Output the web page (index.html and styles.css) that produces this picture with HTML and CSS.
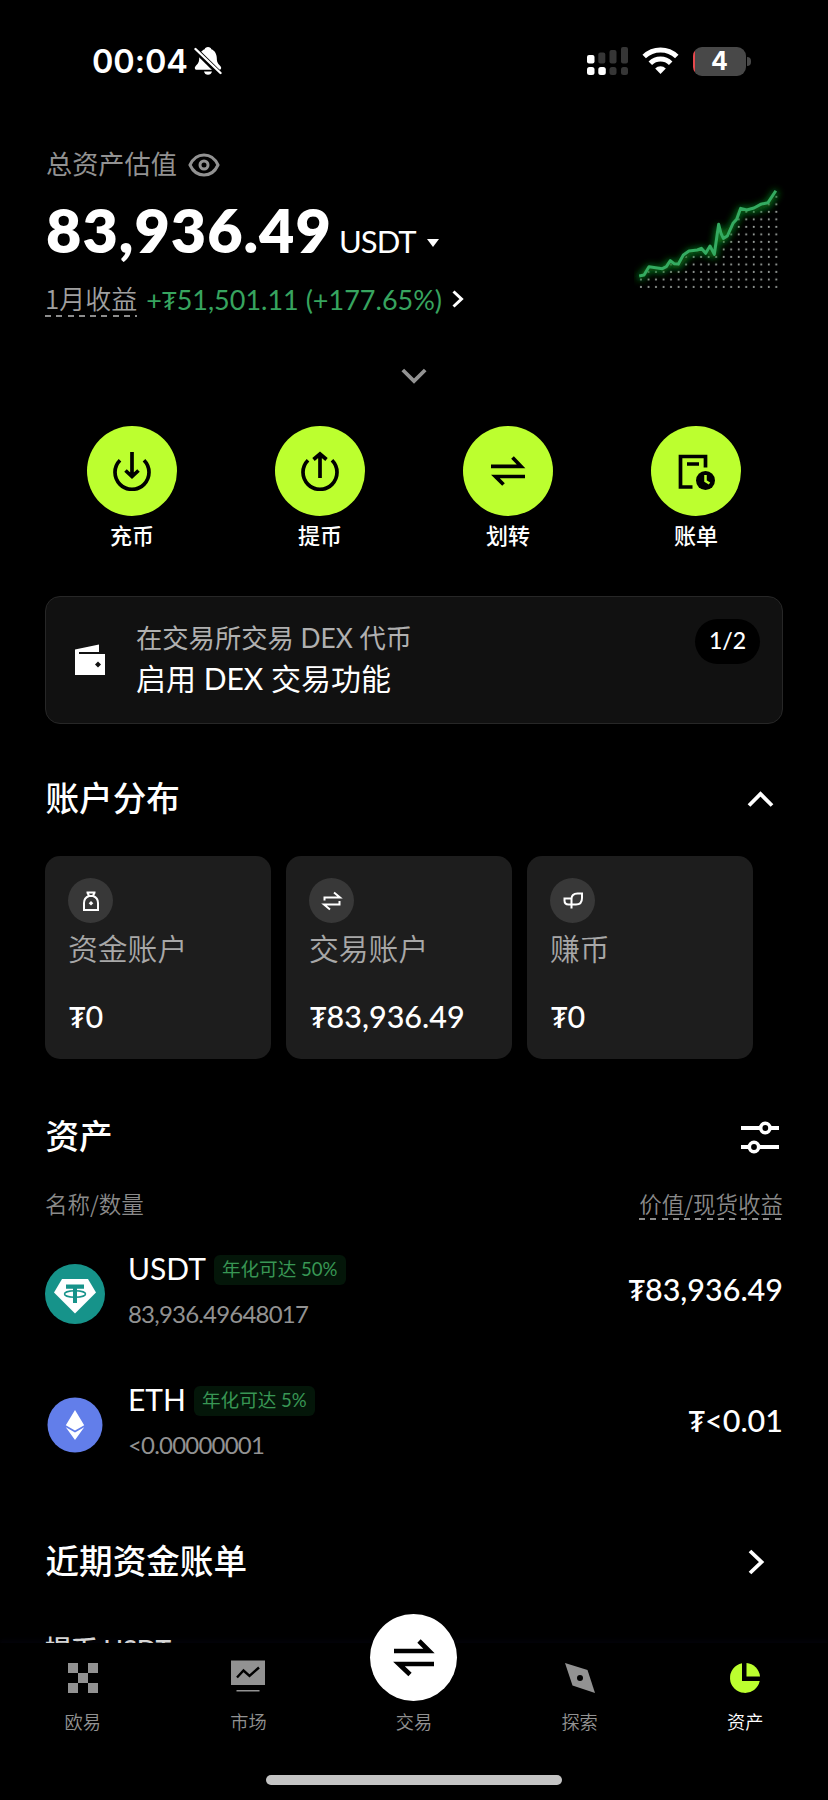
FILE: index.html
```html
<!DOCTYPE html>
<html lang="zh-CN">
<head>
<meta charset="utf-8">
<title>资产</title>
<link rel="stylesheet" href="styles.css">
</head>
<body>
<div class="phone">
  <main class="content">
    <header class="status">
      <span class="time">00:04</span>
      <svg class="bell" width="28" height="30" viewBox="0 0 28 30"><path fill="#fff" d="M14 1c-1.900 0-3 1-3.300 2.200C7 4.600 5.300 8 5.200 12c0 4-1 5.500-3.500 8-1.600 1.800-.8 3.800 1 3.800h22.600c1.800 0 2.600-2 1-3.800-2.500-2.500-3.500-4-3.500-8C22.700 8 21 4.600 17.300 3.200 17 2 15.900 1 14 1zM10 25.500h8c-.4 2-2 3.300-4 3.300s-3.600-1.300-4-3.300z"/><path d="M0 2.500l26 25.500" stroke="#000" stroke-width="5.500"/><path d="M1.500 3l25 24" stroke="#fff" stroke-width="2.400" stroke-linecap="round"/></svg>
      <svg class="signal" width="42" height="30" viewBox="0 0 42 30"><g fill="#fff"><rect x="0" y="9" width="7.500" height="8.500" rx="2"/><rect x="0" y="21" width="7.500" height="8" rx="2.500"/><rect x="11.300" y="21" width="7.500" height="8" rx="2.500"/></g><g fill="#363636"><rect x="11.300" y="6.500" width="7" height="11" rx="2"/><rect x="22.500" y="4" width="7" height="13.500" rx="2"/><rect x="34" y="1" width="7" height="16.500" rx="2"/><rect x="22.500" y="21" width="7" height="8" rx="2.500"/><rect x="34" y="21" width="7" height="8" rx="2.500"/></g></svg>
      <svg class="wifi" width="37" height="28" viewBox="0 0 37 28"><g fill="none" stroke="#fff" stroke-width="5"><path d="M2.200 9.500a23.500 23.500 0 0 1 32.600 0"/><path d="M8.300 16.200a14.700 14.700 0 0 1 20.400 0"/></g><path fill="#fff" d="M18.500 27l-5.300-5.500a7.600 7.600 0 0 1 10.600 0z"/></svg>
      <span class="battery">4</span>
    </header>

    <section class="summary">
      <div class="figures">
        <div class="total-label">总资产估值
          <svg width="32" height="24" viewBox="0 0 32 24" fill="none" stroke="#929292" stroke-width="3"><path d="M2 12C5 5.500 10 2 16 2s11 3.500 14 10c-3 6.500-8 10-14 10S5 18.500 2 12z"/><circle cx="16" cy="12" r="4"/></svg>
        </div>
        <div class="total"><b>83,936.49</b><span>USDT</span><i class="caret"></i></div>
        <div class="profit"><span class="period">1月收益</span><span class="gain">+<i class="tg">₮</i>51,501.11 (+177.65%)</span>
          <svg width="12" height="18" viewBox="0 0 12 18" fill="none" stroke="#fff" stroke-width="3"><path d="M1.500 1.500L9.500 9l-8 7.500"/></svg>
        </div>
      </div>
      <svg class="trend" width="154" height="126" viewBox="660 450 462 378">
        <defs>
          <pattern id="dots" x="670" y="790" width="22.550" height="22.550" patternUnits="userSpaceOnUse"><circle cx="11" cy="11" r="3" fill="#a4aaa6"/></pattern>
          <filter id="glow" x="-20%" y="-30%" width="140%" height="160%"><feGaussianBlur stdDeviation="11"/></filter>
        </defs>
        <path fill="url(#dots)" d="M672 772L690 765 705 745 757 746 769 728 790 738 825 698 862 690 901 708 928 660 957 615 980 570 1062 550 1083 520H1092V810H672z"/>
        <path class="halo" filter="url(#glow)" d="M680 770L705 745 745 750 769 727 790 738 825 698 862 690 901 706 914 625 928 660 957 615 980 570 1020 569 1062 553 1083 521"/>
        <path class="line" d="M680 767L690 765 705 740 725 743 745 746 757 740 769 722 780 731 793 732 808 705 825 693 850 690 862 685 875 700 888 678 901 703 914 613 921 640 928 655 940 648 957 610 968 598 980 565 998 570 1020 564 1040 553 1062 548 1083 516"/>
      </svg>
    </section>

    <div class="expand"><svg width="26" height="17" viewBox="0 0 26 17" fill="none" stroke="#939393" stroke-width="3.800"><path d="M1.800 2L13 13 24.200 2"/></svg></div>

    <nav class="actions">
      <a><span class="disc"><svg width="40" height="40" viewBox="0 0 40 40"><path d="M8 9.300a17 17 0 1 0 24 0M20 1v24.500M13.500 19.500l6.500 6 6.500-6"/></svg></span>充币</a>
      <a><span class="disc"><svg width="40" height="40" viewBox="0 0 40 40"><path d="M8 9.300a17 17 0 1 0 24 0M20 27V3M13.500 8.500L20 3l6.500 5.500"/></svg></span>提币</a>
      <a><span class="disc"><svg width="40" height="40" viewBox="0 0 40 40"><path d="M3 15.300h30L24.500 6.500M37 25.500H7.500L15.500 33.500"/></svg></span>划转</a>
      <a><span class="disc"><svg width="40" height="40" viewBox="0 0 40 40"><path d="M29.500 16.500v-11h-25v30.500h12M11 13h12"/><circle class="solid" cx="29.500" cy="29.500" r="9.500"/><path class="hand" d="M29.500 24v6l4 2.500"/></svg></span>账单</a>
    </nav>

    <section class="banner">
      <svg class="wallet" width="32" height="32" viewBox="0 0 32 32"><path fill="#fff" d="M1 5.500L25 .5v7.500H5v2h26v21H1z"/><path fill="#111" d="M24 17.500l3 3-3 3-3-3z"/></svg>
      <div class="banner-text"><p>在交易所交易 DEX 代币</p><h3>启用 DEX 交易功能</h3></div>
      <span class="pager">1/2</span>
    </section>

    <div class="heading h-accounts"><h2>账户分布</h2><svg class="up" width="28" height="18" viewBox="0 0 28 18" fill="none" stroke="#fff" stroke-width="3.800"><path d="M2 15.500L13.500 4 25 15.500"/></svg></div>

    <section class="cards">
      <article><span class="badge"><svg width="24" height="24" viewBox="0 0 24 24"><path d="M7.500 3.500h9M8.500 3.500L10 7h4l1.500-3.500M10 7c-4 1.500-5 4-5 7v7h14v-7c0-3-1-5.500-5-7"/><path class="fill" d="M12 12l2.300 2.300L12 16.600l-2.300-2.300z"/></svg></span><h4>资金账户</h4><p><i class="tg">₮</i>0</p></article>
      <article><span class="badge"><svg width="24" height="24" viewBox="0 0 24 24"><path d="M4.500 11.500V8.500h15.500L14 3.500M19.500 12v3.500H4l6 5"/></svg></span><h4>交易账户</h4><p><i class="tg">₮</i>83,936.49</p></article>
      <article><span class="badge"><svg width="24" height="24" viewBox="0 0 24 24"><path d="M10.500 19.500V10c0-3.500 2.500-5.500 6-5.500h4.500v4.500c0 4-2 6.500-6 6.500h-4.500M10.500 9.500H3.500v2c0 2.500 1.500 4 4 4h3"/></svg></span><h4>赚币</h4><p><i class="tg">₮</i>0</p></article>
    </section>

    <div class="heading h-assets"><h2>资产</h2><svg class="filter" width="40" height="34" viewBox="0 0 40 34" fill="none" stroke="#fff" stroke-width="4"><path d="M1 8h19M30 8h9M1 27h8M19 27h20"/><circle cx="25.300" cy="8" r="4.700" stroke-width="3.600"/><circle cx="14" cy="27" r="4.700" stroke-width="3.600"/></svg></div>
    <div class="columns"><span>名称/数量</span><span class="dashed">价值/现货收益</span></div>

    <section class="asset">
      <svg class="coin" width="60" height="60" viewBox="0 0 60 60"><circle cx="30" cy="30" r="30" fill="#16938a"/><path fill="#fff" d="M17 15h26l8 13.500L30 49.500 9 28.500z"/><path fill="#16938a" d="M21 20.500h18v4.200h-7v14.300h-4V24.700h-7z"/><ellipse cx="30" cy="30" rx="10.500" ry="3.200" fill="none" stroke="#16938a" stroke-width="1.500"/></svg>
      <div class="asset-info"><div class="name">USDT<span class="tag">年化可达 50%</span></div><div class="qty">83,936.49648017</div></div>
      <div class="value"><i class="tg">₮</i>83,936.49</div>
    </section>
    <section class="asset">
      <svg class="coin" width="60" height="60" viewBox="0 0 60 60"><circle cx="30" cy="30" r="27.500" fill="#627eea"/><path fill="#fff" d="M30 15l9.200 15.200L30 35.500l-9.200-5.300zM20.800 32.200L30 37.500l9.200-5.300L30 45z"/></svg>
      <div class="asset-info"><div class="name">ETH<span class="tag">年化可达 5%</span></div><div class="qty">&lt;0.00000001</div></div>
      <div class="value"><i class="tg">₮</i>&lt;0.01</div>
    </section>

    <div class="heading h-bills"><h2>近期资金账单</h2><svg class="right" width="18" height="26" viewBox="0 0 18 26" fill="none" stroke="#fff" stroke-width="3.800"><path d="M2 2l11.500 11L2 24"/></svg></div>
    <div class="bill">提币 USDT</div>
  </main>

  <footer class="tabbar">
    <nav class="tabs">
      <a><svg width="36" height="36" viewBox="0 0 36 36" fill="#929292"><path d="M3 3h10v10H3zM23 3h10v10H23zM13 13h10v10H13zM3 23h10v10H3zM23 23h10v10H23z"/></svg>欧易</a>
      <a><svg width="36" height="36" viewBox="0 0 36 36"><path fill="#929292" d="M1 .5h34V25H1zM6.500 30h23v1.500h-23z"/><path d="M7 17.500l6.500-7 6 5.500L29 7.500" fill="none" stroke="#000" stroke-width="2.400"/></svg>市场</a>
      <a class="trade"><span class="fab"><svg width="48" height="44" viewBox="0 0 48 44"><path d="M4 15h35L29 5M44 28H9l11 10.500"/></svg></span>交易</a>
      <a><svg width="36" height="36" viewBox="0 0 36 36"><path fill="#929292" d="M3 3l22.500 7L33 33l-22.500-7.500z"/><circle cx="18" cy="18" r="3" fill="#000"/></svg>探索</a>
      <a class="active"><svg width="36" height="36" viewBox="0 0 36 36" fill="#bcff2f"><path d="M15 3.200V21h17.700A15 15 0 1 1 15 3.200z"/><path d="M19.500 3A15 15 0 0 1 33 16.500H19.500z"/></svg>资产</a>
    </nav>
    <div class="home-bar"></div>
  </footer>
</div>
</body>
</html>
```
FILE: styles.css
```css
* { box-sizing: border-box; margin: 0; padding: 0; }
body { background: #000; color: #fff; font-family: Lato, "Noto Sans CJK SC", sans-serif; }
i { font-style: normal; }
svg { display: block; flex: none; }
.phone { width: 828px; height: 1800px; background: #000; }
.content { height: 1643px; padding: 0 45px; overflow: hidden; }
.tg { display: inline-block; font-family: "Noto Sans", "DejaVu Sans", sans-serif; font-size: .95em; line-height: 1; }

.status { display: flex; align-items: center; height: 122px; padding: 0 37px 0 47px; }
.time { font: 600 32.500px/40px Inter, sans-serif; letter-spacing: -.1px; width: 102px; padding-top: 2px; }
.bell { margin-right: auto; }
.signal { margin-right: -1px; }
.wifi { margin: 0 14px; }
.battery { position: relative; width: 53px; height: 29px; border-radius: 9px; background: linear-gradient(90deg, #e5484d 2px, #484848 2px); font: 700 25px/29px Inter, sans-serif; text-align: center; }
.battery::after { content: ""; position: absolute; left: 54px; top: 10px; width: 4px; height: 9px; border-radius: 0 4px 4px 0; background: #484848; }

.summary { display: flex; justify-content: space-between; height: 228px; }
.figures { padding-top: 22px; }
.total-label { display: flex; align-items: center; gap: 11px; height: 40px; padding-left: 1px; font-size: 26.200px; line-height: 38px; color: #929292; }
.total-label svg { margin-top: 2px; }
.total { display: flex; align-items: baseline; height: 76px; line-height: 76px; margin-top: 8px; padding-left: 1px; }
.total b { font-size: 61px; font-weight: 800; letter-spacing: 1px; }
.total span { font-size: 31px; margin-left: 7px; letter-spacing: -.9px; }
.caret { border: 6px solid transparent; border-top: 8px solid #fff; border-bottom: 0; margin-left: 11px; align-self: center; margin-top: 26px; }
.profit { display: flex; align-items: center; height: 40px; margin-top: 11px; font-size: 26px; white-space: nowrap; }
.period { color: #a0a0a0; font-weight: 350; font-family: "Noto Sans CJK SC", sans-serif; font-size: 26px; line-height: 31px; padding-bottom: 4px; }
.period, .dashed { background: repeating-linear-gradient(90deg, #8d8d8d 0 6px, transparent 6px 11.300px) bottom / 100% 2px no-repeat; }
.gain { color: #37a45f; font-size: 27px; margin: 0 10px 0 9px; }
.trend { margin: 48px -5px 0 0; }
.line, .halo { fill: none; stroke: #34ab61; stroke-width: 9; stroke-linejoin: round; stroke-linecap: square; }
.halo { stroke: #087a1c; stroke-width: 18; }

.expand { display: flex; justify-content: center; height: 76px; padding-top: 18px; }
.actions { display: grid; grid-template-columns: repeat(4, 188px); margin: 0 -7px; height: 170px; }
.actions a { display: flex; flex-direction: column; align-items: center; font-size: 22px; font-weight: 500; line-height: 40px; }
.disc { display: grid; place-items: center; width: 90px; height: 90px; border-radius: 50%; background: #bcff2f; }
.disc path, .fab path { fill: none; stroke: #000; stroke-width: 3.700; }
.fab path { stroke-width: 4.700; }
.disc .solid { fill: #000; }
.disc .hand { stroke: #bcff2f; stroke-width: 2.500; }

.banner { display: flex; height: 128px; border: 1px solid #272727; border-radius: 15px; background: #111; padding: 0 22px 0 28px; }
.wallet { margin-top: 47px; }
.banner-text { flex: 1; margin: 21px 0 0 30px; }
.banner-text p { color: #b0b0b0; font-size: 26.300px; line-height: 40px; }
.banner-text h3 { font-size: 30px; font-weight: 400; line-height: 41px; }
.pager { width: 65px; height: 45px; margin-top: 22px; border-radius: 23px; background: #000; font-size: 23px; font-weight: 500; line-height: 43px; text-align: center; }

.heading { display: flex; justify-content: space-between; align-items: center; height: 50px; }
.heading h2 { padding-left: .5px; font-size: 33.600px; font-weight: 500; line-height: 48px; margin-top: -2px; }
.h-accounts { margin-top: 50px; }
.up { margin-right: 8px; }
.cards { display: grid; grid-template-columns: repeat(3, 226px); gap: 15px; margin-top: 32px; }
.cards article { height: 203px; padding: 22px 23px; border-radius: 15px; background: #1d1d1d; }
.badge { display: grid; place-items: center; width: 45px; height: 45px; border-radius: 50%; background: #383838; }
.badge path { fill: none; stroke: #fff; stroke-width: 2; }
.badge .fill { fill: #fff; stroke: none; }
.cards h4 { margin-top: 4px; color: #a8a8a8; font-size: 29.800px; font-weight: 350; line-height: 44px; }
.cards p { margin-top: 23px; padding-left: 1px; font-size: 30.500px; font-weight: 500; line-height: 44px; }

.h-assets { margin-top: 53px; }
.filter { margin-right: 3px; }
.columns { display: flex; justify-content: space-between; margin-top: 26px; height: 32px; font-family: "Noto Sans CJK SC", sans-serif; font-size: 22.500px; font-weight: 350; line-height: 30px; color: #8a8a8a; }
.asset { display: flex; height: 131px; }
.columns + .asset { margin-top: 20px; }
.coin { margin-top: 24px; }
.asset-info { flex: 1; margin-left: 23px; margin-top: -2px; }
.name { display: flex; align-items: center; gap: 8px; height: 60px; font-size: 30px; }
.tag { height: 30px; margin-top: 3px; padding: 0 8px; border-radius: 6px; background: #041609; color: #389654; font-size: 18.600px; line-height: 29px; }
.qty { color: #929292; font-size: 24px; line-height: 32px; letter-spacing: -.8px; }
.value { font-size: 30.500px; font-weight: 500; line-height: 99px; }
.h-bills { margin-top: 35px; }
.right { margin-right: 17px; }
.bill { margin-top: 42px; color: #d5d5d5; font-size: 26.500px; font-weight: 500; line-height: 40px; letter-spacing: -.4px; }

.tabbar { height: 157px; background: #000; box-shadow: 0 -3px 4px #030309; }
.tabs { display: grid; grid-template-columns: repeat(5, 1fr); height: 132px; }
.tabs a { display: flex; flex-direction: column; align-items: center; gap: 10px; padding-top: 17px; color: #929292; font-size: 18.200px; line-height: 32px; font-weight: 350; }
.tabs .active { color: #fff; }
.tabs .trade { padding-top: 0; gap: 5px; margin-top: -29px; }
.fab { position: relative; display: grid; place-items: center; width: 87px; height: 87px; border-radius: 50%; background: #fff; }
.home-bar { width: 296px; height: 10px; margin: 0 auto; border-radius: 5px; background: #c4c4c4; }
```
